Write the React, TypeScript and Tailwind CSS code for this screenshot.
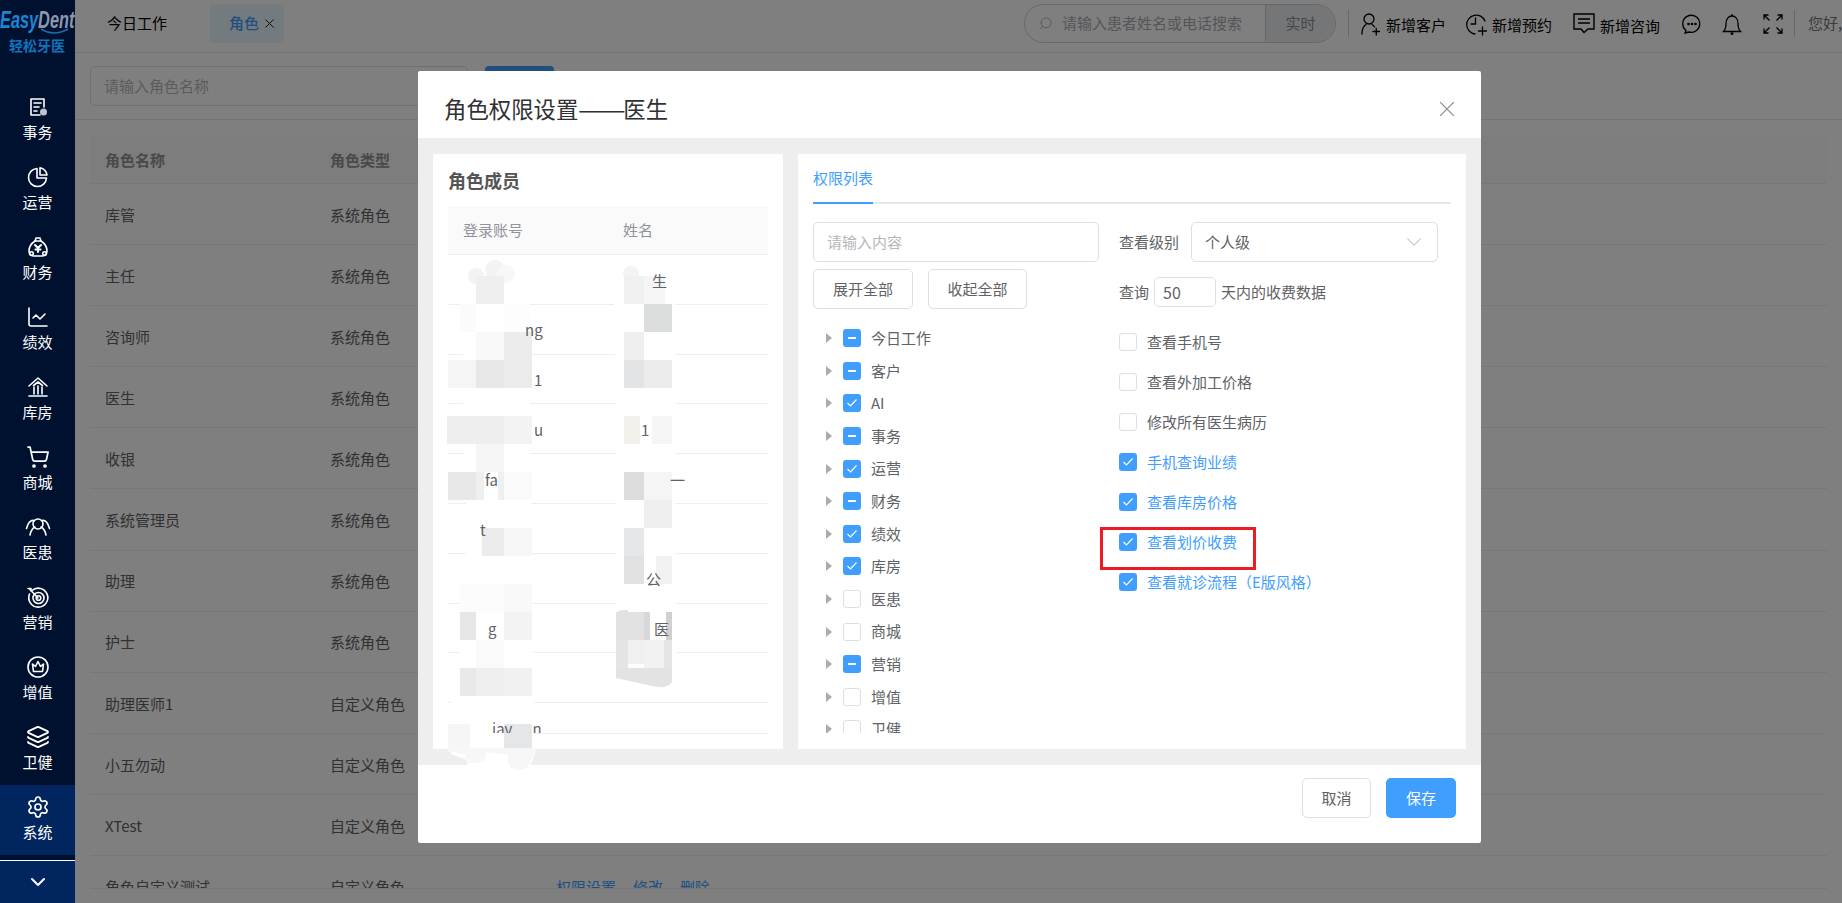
import React from "react";
import { ChevronDown, X, ChartLine, ShoppingCart, Layers, Settings, Search } from "lucide-react";

const s = { fill: "none", stroke: "currentColor", strokeWidth: 1.6, strokeLinecap: "round", strokeLinejoin: "round" } as const;

const IconAffair = () => (
  <svg width="24" height="24" viewBox="0 0 24 24" {...s}>
    <path d="M14 20H5V4h13v8" />
    <path d="M8 8h7M8 12h5M8 16h3" />
    <circle cx="17.5" cy="17" r="3.5" fill="currentColor" stroke="none" opacity="0.75" />
  </svg>
);
const IconPie = () => (
  <svg width="24" height="24" viewBox="0 0 24 24" {...s}>
    <path d="M11 3.5a9 9 0 1 0 9.5 9.5H11z" />
    <path d="M14 2.8A9 9 0 0 1 21 10h-7z" />
  </svg>
);
const IconFinance = () => (
  <svg width="24" height="24" viewBox="0 0 24 24" {...s}>
    <path d="M9 6c-3 2-6 6-6 10 0 3 2 5 5 5h8c3 0 5-2 5-5 0-4-3-8-6-10" />
    <path d="M9 6l1-3h4l1 3z" />
    <path d="M9 10l3 3 3-3M12 13v4M9.5 14.5h5" strokeWidth={2} />
    <circle cx="5.5" cy="18.5" r="1.8" />
    <circle cx="18.5" cy="18.5" r="1.8" />
  </svg>
);
const IconWarehouse = () => (
  <svg width="24" height="24" viewBox="0 0 24 24" {...s}>
    <path d="M3 11l9-8 9 8" />
    <path d="M7.5 10.5L12 7l4.5 3.5" />
    <path d="M8 12v7M12 11v8M16 12v7M3 21h18" />
  </svg>
);
const IconPatients = () => (
  <svg width="26" height="24" viewBox="0 0 26 24" {...s}>
    <circle cx="13" cy="9" r="5" />
    <path d="M5 20c1-5 3-7 5-8M21 20c-1-5-3-7-5-8" />
    <path d="M9 5.5C6 5 3 8 1.5 13.5M17 5.5c3-.5 6 2.500 7.500 8" />
  </svg>
);
const IconTarget = () => (
  <svg width="24" height="24" viewBox="0 0 24 24" {...s}>
    <path d="M6 5.500A9.500 9.500 0 1 1 3.500 9" />
    <circle cx="12.500" cy="13" r="5.500" />
    <circle cx="12.500" cy="13" r="2.300" />
    <path d="M12 13L3.500 4M2 3.500h3v2.500" />
  </svg>
);
const IconCrown = () => (
  <svg width="24" height="24" viewBox="0 0 24 24" {...s}>
    <circle cx="12" cy="12" r="10" />
    <path d="M6.500 9l3 2.500L12 6.500l2.500 5 3-2.500-1 7.500h-9z" />
  </svg>
);
const IconUserPlus = () => (
  <svg width="22" height="26" viewBox="0 0 22 26" fill="none" stroke="currentColor" strokeWidth="1.3" strokeLinecap="round">
    <circle cx="10" cy="8" r="5" />
    <path d="M3 23c0-5 1.500-8 4-9.500M13 13.500c1 .5 2 1.500 2.500 2.500" />
    <path d="M14 20.500h6.500M17.250 17.500v6.500" />
  </svg>
);
const IconClockPlus = () => (
  <svg width="24" height="26" viewBox="0 0 24 26" fill="none" stroke="currentColor" strokeWidth="1.3" strokeLinecap="round">
    <path d="M20 10A9.500 9.500 0 1 0 10 23" />
    <path d="M10.500 7v6H6" />
    <path d="M13.500 20h8M17.500 16v8" />
  </svg>
);
const IconMessage = () => (
  <svg width="22" height="26" viewBox="0 0 22 26" fill="none" stroke="currentColor" strokeWidth="1.4">
    <path d="M1 3h20v15h-6l-4 3.500L8 18H1z" />
    <path d="M5 8h12M5 12h12" />
  </svg>
);
const IconChat = () => (
  <svg width="20" height="20" viewBox="0 0 20 20" fill="none" stroke="currentColor" strokeWidth="1.3">
    <path d="M4 16.500A8.500 8.500 0 1 1 7 18l-4 1z" />
    <circle cx="6.500" cy="10" r=".7" fill="currentColor" />
    <circle cx="10" cy="10" r=".7" fill="currentColor" />
    <circle cx="13.500" cy="10" r=".7" fill="currentColor" />
  </svg>
);
const IconBell = () => (
  <svg width="20" height="24" viewBox="0 0 20 24" fill="none" stroke="currentColor" strokeWidth="1.3">
    <path d="M1.500 19.500c2-2 2.500-4 2.500-8 0-4.500 2.500-7.500 6-7.500s6 3 6 7.500c0 4 .5 6 2.500 8z" />
    <path d="M10 4V2" />
    <circle cx="10" cy="21.500" r="1.500" fill="currentColor" stroke="none" />
  </svg>
);
const IconExpand = () => (
  <svg width="20" height="20" viewBox="0 0 20 20" fill="none" stroke="currentColor" strokeWidth="1.3">
    <path d="M1 5.500V1h4.500M1 1l5.500 5.500M19 5.500V1h-4.500M19 1l-5.500 5.500M1 14.500V19h4.500M1 19l5.500-5.500M19 14.500V19h-4.500M19 19l-5.500-5.500" />
  </svg>
);

const nav: [string, React.ReactNode][] = [
  ["事务", <IconAffair />],
  ["运营", <IconPie />],
  ["财务", <IconFinance />],
  ["绩效", <ChartLine size={24} strokeWidth={1.6} />],
  ["库房", <IconWarehouse />],
  ["商城", <ShoppingCart size={24} strokeWidth={1.7} />],
  ["医患", <IconPatients />],
  ["营销", <IconTarget />],
  ["增值", <IconCrown />],
  ["卫健", <Layers size={24} strokeWidth={1.8} />],
  ["系统", <Settings size={24} strokeWidth={1.7} />],
];

const roles: [string, string][] = [
  ["库管", "系统角色"],
  ["主任", "系统角色"],
  ["咨询师", "系统角色"],
  ["医生", "系统角色"],
  ["收银", "系统角色"],
  ["系统管理员", "系统角色"],
  ["助理", "系统角色"],
  ["护士", "系统角色"],
  ["助理医师1", "自定义角色"],
  ["小五勿动", "自定义角色"],
  ["XTest", "自定义角色"],
  ["角色自定义测试", "自定义角色"],
];

type CheckState = "on" | "off" | "half";
const tree: [string, CheckState][] = [
  ["今日工作", "half"],
  ["客户", "half"],
  ["AI", "on"],
  ["事务", "half"],
  ["运营", "on"],
  ["财务", "half"],
  ["绩效", "on"],
  ["库房", "on"],
  ["医患", "off"],
  ["商城", "off"],
  ["营销", "half"],
  ["增值", "off"],
  ["卫健", "off"],
];

const perms: [string, boolean][] = [
  ["查看手机号", false],
  ["查看外加工价格", false],
  ["修改所有医生病历", false],
  ["手机查询业绩", true],
  ["查看库房价格", true],
  ["查看划价收费", true],
  ["查看就诊流程（E版风格）", true],
];

// Fragments of the account / name cells left readable by the mosaic in the reference.
const members: { a: string; ax: number; n: string; nx: number }[] = [
  { a: "", ax: 0, n: "生", nx: 29 },
  { a: "ng", ax: 62, n: "", nx: 0 },
  { a: "1", ax: 71, n: "", nx: 0 },
  { a: "u", ax: 71, n: "1", nx: 18 },
  { a: "fa", ax: 22, n: "一", nx: 47 },
  { a: "t", ax: 17, n: "", nx: 0 },
  { a: "", ax: 0, n: "公", nx: 23 },
  { a: "g", ax: 25, n: "医", nx: 31 },
  { a: "", ax: 0, n: "", nx: 0 },
  { a: "iav\u00a0\u00a0\u00a0\u00a0\u00a0\u00a0n", ax: 29, n: "", nx: 0 },
];

const tiles: [number, number, number, number, string][] = [
  [476, 276, 28, 28, "#efefef"], [460, 304, 16, 28, "#fbfbfb"], [504, 304, 26, 28, "#fdfdfd"],
  [476, 332, 28, 28, "#f9f9f9"], [504, 332, 28, 28, "#ececec"],
  [448, 360, 28, 28, "#f5f5f5"], [476, 360, 28, 28, "#e8e8e8"], [504, 360, 28, 28, "#ebebeb"],
  [447, 416, 57, 28, "#eeeeee"], [504, 416, 28, 28, "#f3f3f3"], [476, 444, 28, 28, "#f6f6f6"],
  [448, 472, 28, 28, "#e8e8e8"], [476, 472, 8, 28, "#efefef"], [498, 472, 6, 28, "#efefef"], [504, 472, 28, 28, "#fafafa"],
  [482, 528, 22, 28, "#ebebeb"], [504, 528, 28, 28, "#f7f7f7"],
  [460, 584, 44, 28, "#fcfcfc"], [504, 584, 28, 28, "#f9f9f9"],
  [460, 612, 16, 28, "#e6e6e6"], [504, 612, 28, 28, "#f3f3f3"], [476, 640, 28, 28, "#fafafa"],
  [460, 668, 16, 28, "#e9e9e9"], [476, 668, 28, 28, "#efefef"], [504, 668, 28, 28, "#f1f1f1"],
  [448, 724, 22, 28, "#f6f6f6"], [504, 724, 28, 28, "#e5e6e8"],
  [624, 276, 20, 28, "#f0f0f0"], [644, 276, 21, 28, "#f5f5f5"],
  [644, 304, 28, 28, "#dcdddd"], [624, 332, 20, 28, "#efefef"],
  [624, 360, 20, 28, "#e2e4e6"], [644, 360, 28, 28, "#ebebeb"],
  [624, 416, 16, 28, "#f3f0ec"], [652, 416, 20, 28, "#f5f5f5"],
  [624, 472, 20, 28, "#dcdcdc"], [644, 472, 28, 28, "#f5f5f5"],
  [644, 500, 28, 28, "#efefef"], [624, 528, 20, 28, "#e6e7e8"],
  [624, 556, 20, 28, "#e2e2e2"], [656, 556, 16, 28, "#f2f2f2"],
  [616, 612, 28, 28, "#e2e2e2"], [644, 612, 6, 28, "#d8d8d8"], [666, 612, 6, 28, "#d0d0d0"],
  [616, 640, 12, 28, "#e4e4e4"], [628, 640, 16, 24, "#f0f0f0"], [644, 640, 20, 28, "#f2f2f2"], [664, 640, 8, 28, "#e5e5e5"],
];

const Mosaic = () => (
  <svg className="absolute left-0 top-0 pointer-events-none" width="1063" height="772" viewBox="418 71 1063 772">
    <path d="M465 276c0-6 4-9 9-9 1-5 4-7 9-7s8 3 9 6c3-2 10-2 13 1 3 2 5 5 5 9l20 28v130l5 320-8 20-8 6c-2 6-10 6-12 0v-10l-20-4-3 14c-4 5-12 4-15-2l-2-18-16-6v-55l12-60 4-100-4-150 0-60 12-5z" fill="#ffffff" />
    <path d="M624 276c0-6 4-12 10-12 6 0 9 4 10 8 8 0 16 4 19 10l12 22v330l3 30-8 30h-20l-20-10-14-20V400l-2-100z" fill="#ffffff" />
    <circle cx="495" cy="270" r="10" fill="#f3f3f3" />
    <circle cx="506" cy="274" r="9" fill="#f7f7f7" />
    <circle cx="476" cy="276" r="8" fill="#f3f3f3" />
    <circle cx="631" cy="274" r="8" fill="#f3f3f3" />
    {tiles.map(([x, y, w, h, c], i) => (
      <rect key={i} x={x} y={y} width={w} height={h} fill={c} />
    ))}
    <path d="M448 750l17 5v4c2 6 18 6 21-2v-5l22 3v8c2 9 20 9 22 0l4-8v-7h-86z" fill="#f7f7f7" />
    <path d="M616 616c0-5 4-6 8-6h4v6h-12z" fill="#e2e2e2" />
    <path d="M616 668h56v14c-4 6-12 6-20 4l-36-8z" fill="#e3e3e3" />
  </svg>
);

const Check = ({ state }: { state: CheckState }) => (
  <span
    className={
      state === "off"
        ? "flex h-[18px] w-[18px] shrink-0 items-center justify-center rounded-[3px] border border-[#dcdfe6] bg-white"
        : "flex h-[18px] w-[18px] shrink-0 items-center justify-center rounded-[3px] bg-[#409eff]"
    }
  >
    {state === "on" && (
      <svg width="12" height="10" viewBox="0 0 12 10" fill="none" stroke="#fff" strokeWidth="1.2">
        <path d="M1.500 5l3 3 6-6.500" />
      </svg>
    )}
    {state === "half" && <span className="h-[2px] w-[8px] bg-white" />}
  </span>
);

export default function App() {
  return (
    <div className="relative flex h-[903px] w-[1842px] overflow-hidden bg-white text-[15px] text-[#606266] [font-family:'Noto_Sans_CJK_SC','Noto_Sans',sans-serif]">
      <aside className="relative z-20 flex h-full w-[75px] shrink-0 flex-col bg-[#001130] text-white">
        <div className="relative h-[85px] shrink-0 overflow-hidden">
          <div className="absolute left-0 top-[6px] origin-left scale-x-[0.68] whitespace-nowrap text-[24px] font-bold italic leading-[28px] [font-family:'Liberation_Sans',sans-serif]">
            <span className="text-[#1a86d8]">Easy</span>
            <span className="text-[#8b98ad]">Dent</span>
          </div>
          <svg className="absolute left-[40px] top-[28px]" width="30" height="7" viewBox="0 0 30 7" fill="none" stroke="#1a6fb8" strokeWidth="1.500">
            <path d="M1 1c8 5 18 5 27 0" />
          </svg>
          <div className="absolute left-[9px] top-[36px] whitespace-nowrap text-[14px] font-bold leading-[18px] text-[#0f73bd]">
            轻松牙医
          </div>
        </div>
        {nav.map(([label, icon]) => (
          <div
            key={label}
            className={
              label === "系统"
                ? "flex h-[70px] shrink-0 flex-col items-center bg-[#00255f] pt-[10px]"
                : "flex h-[70px] shrink-0 flex-col items-center pt-[10px]"
            }
          >
            <span className="flex h-[24px] items-center justify-center">{icon}</span>
            <span className="mt-[2px] text-[15px] leading-[22px]">{label}</span>
          </div>
        ))}
        <div className="mt-[5px] flex flex-1 items-center justify-center border-t border-white bg-[#00255f]">
          <ChevronDown size={24} strokeWidth={2} />
        </div>
      </aside>

      <main className="flex min-w-0 flex-1 flex-col">
        <header className="flex h-[53px] shrink-0 items-center overflow-hidden border-b border-[#e6e6e6] pb-[6px] pt-[1px] text-black">
          <span className="ml-[32px] shrink-0">今日工作</span>
          <div className="ml-[43px] flex h-[39px] w-[74px] shrink-0 items-center rounded-[4px] bg-[#e8f6ff] pl-[19px] text-[#409eff]">
            <span className="font-medium">角色</span>
            <X size={15} strokeWidth={1.6} className="ml-[3px] text-[#222]" />
          </div>
          <div className="ml-[740px] flex h-[39px] w-[312px] shrink-0 items-center overflow-hidden rounded-[20px] border border-[#cfcfcf] text-[#a8abb2]">
            <Search size={15} strokeWidth={1.4} className="ml-[13px] -scale-x-100" />
            <span className="ml-[9px] w-[203px] shrink-0">请输入患者姓名或电话搜索</span>
            <span className="flex h-full flex-1 items-center justify-center border-l border-[#d0d0d0] bg-[#e9ecf0] text-[#8a8d94]">实时</span>
          </div>
          <span className="ml-[12px] h-[27px] w-px shrink-0 bg-[#d0d0d0]" />
          <span className="ml-[10px] shrink-0"><IconUserPlus /></span>
          <span className="ml-[5px] mt-[4px] shrink-0">新增客户</span>
          <span className="ml-[19px] shrink-0"><IconClockPlus /></span>
          <span className="ml-[3px] mt-[4px] shrink-0">新增预约</span>
          <span className="ml-[21px] shrink-0"><IconMessage /></span>
          <span className="ml-[5px] mt-[6px] shrink-0">新增咨询</span>
          <span className="ml-[22px] shrink-0"><IconChat /></span>
          <span className="ml-[20px] shrink-0"><IconBell /></span>
          <span className="ml-[21px] shrink-0"><IconExpand /></span>
          <span className="ml-[11px] h-[27px] w-px shrink-0 bg-[#d0d0d0]" />
          <span className="ml-[13px] shrink-0 whitespace-nowrap text-[#777]">您好,医生</span>
        </header>

        <div className="flex h-[67px] shrink-0 items-start gap-[17px] border-b border-[#e6e6e6] pl-[15px] pt-[13px]">
          <div className="flex h-[40px] w-[378px] items-center rounded-[5px] border border-[#dcdfe6] pl-[13px] text-[#b4b7bd]">
            请输入角色名称
          </div>
          <div className="flex h-[40px] w-[69px] items-center justify-center rounded-[4px] bg-[#409eff] text-white">查询</div>
        </div>

        <div className="mx-[15px] mt-[15px] h-[754px] overflow-hidden border-b border-[#ebeef5]">
          <div className="flex h-[49px] items-center border-b border-[#ebeef5] bg-[#fafafa] pt-[2px] font-bold text-[#909399]">
            <span className="w-[240px] pl-[15px]">角色名称</span>
            <span>角色类型</span>
          </div>
          {roles.map(([name, type]) => (
            <div key={name} className="flex h-[61.1px] items-center border-b border-[#ebeef5] pt-[2px]">
              <span className="w-[240px] pl-[15px]">{name}</span>
              <span className="w-[226px]">{type}</span>
              <span className="flex gap-[17px] text-[#409eff]">
                <span>权限设置</span>
                <span>修改</span>
                <span>删除</span>
              </span>
            </div>
          ))}
        </div>
      </main>

      <div className="absolute bottom-0 left-[75px] right-0 top-0 z-10 bg-black/50">
        <div className="absolute left-[343px] top-[71px] flex h-[772px] w-[1063px] flex-col rounded-[2px] bg-white">
          <div className="flex h-[67px] shrink-0 items-center justify-between pl-[26px] pr-[21px] pt-[9px]">
            <span className="flex text-[22.4px] text-[#303133]">
              <span>角色权限设置</span>
              <span className="inline-block w-[45px] origin-left scale-x-[1.27] whitespace-nowrap">——</span>
              <span>医生</span>
            </span>
            <X size={26} strokeWidth={1} className="text-[#909399]" />
          </div>

          <div className="flex h-[627px] shrink-0 gap-[15px] bg-[#eeeeee] pl-[15px] pt-[16px]">
            <section className="h-[595px] w-[350px] shrink-0 bg-white px-[15px]">
              <h2 className="flex h-[52px] items-center text-[18px] font-bold text-[#555]">角色成员</h2>
              <div className="h-[528px] w-[320px] overflow-hidden border-b border-[#ebeef5]">
                <div className="flex h-[49px] items-center border-b border-[#ebeef5] bg-[#fafafa] text-[#909399]">
                  <span className="w-[175px] pl-[15px]">登录账号</span>
                  <span>姓名</span>
                </div>
                {members.map((m, i) => (
                  <div key={i} className="flex h-[49.8px] items-center border-b border-[#ebeef5] pt-[3px]">
                    <span className="w-[175px] pl-[15px]"><span className="relative z-10" style={{ marginLeft: m.ax }}>{m.a}</span></span>
                    <span><span className="relative z-10" style={{ marginLeft: m.nx }}>{m.n}</span></span>
                  </div>
                ))}
              </div>
            </section>

            <section className="h-[595px] w-[668px] shrink-0 bg-white px-[15px]">
              <div className="flex h-[50px] border-b-2 border-[#e4e7ed]">
                <span className="-mb-[2px] flex w-[60px] items-center border-b-2 border-[#409eff] pt-[1px] text-[#409eff]">权限列表</span>
              </div>
              <div className="flex pt-[18px]">
                <div className="w-[286px] shrink-0">
                  <div className="flex h-[40px] items-center rounded-[5px] border border-[#dcdfe6] pl-[13px] text-[#b4b7bd]">请输入内容</div>
                  <div className="mt-[7px] flex gap-[15px]">
                    <span className="flex h-[40px] w-[100px] items-center justify-center rounded-[5px] border border-[#dcdfe6]">展开全部</span>
                    <span className="flex h-[40px] w-[99px] items-center justify-center rounded-[5px] border border-[#dcdfe6]">收起全部</span>
                  </div>
                  <div className="mt-[13px] h-[411px] overflow-hidden">
                    {tree.map(([label, st]) => (
                      <div key={label} className="flex h-[32.6px] items-center pl-[13px]">
                        <span className="h-0 w-0 border-y-[5px] border-l-[6px] border-y-transparent border-l-[#a8abb2]" />
                        <span className="ml-[11px]"><Check state={st} /></span>
                        <span className="ml-[10px]">{label}</span>
                      </div>
                    ))}
                  </div>
                </div>

                <div className="ml-[20px] flex-1">
                  <div className="flex h-[40px] items-center">
                    <span className="w-[72px] shrink-0">查看级别</span>
                    <div className="flex h-[40px] w-[247px] items-center justify-between rounded-[5px] border border-[#dcdfe6] pl-[13px] pr-[10px]">
                      <span>个人级</span>
                      <ChevronDown size={26} strokeWidth={0.9} className="text-[#a8abb2]" />
                    </div>
                  </div>
                  <div className="mt-[15px] flex h-[30px] items-center">
                    <span className="w-[35px] shrink-0">查询</span>
                    <span className="flex h-[30px] w-[62px] items-center rounded-[5px] border border-[#dcdfe6] pl-[8px] text-[16px]">50</span>
                    <span className="ml-[5px]">天内的收费数据</span>
                  </div>
                  <div className="mt-[15px]">
                    {perms.map(([label, on]) => (
                      <div key={label} className={on ? "flex h-[40px] items-center text-[#409eff]" : "flex h-[40px] items-center"}>
                        <Check state={on ? "on" : "off"} />
                        <span className="ml-[10px]">{label}</span>
                      </div>
                    ))}
                  </div>
                </div>
              </div>
            </section>
          </div>

          <div className="flex flex-1 items-start justify-end gap-[15px] pr-[25px] pt-[13px]">
            <span className="flex h-[40px] w-[69px] items-center justify-center rounded-[5px] border border-[#dcdfe6]">取消</span>
            <span className="flex h-[40px] w-[70px] items-center justify-center rounded-[5px] bg-[#409eff] text-white">保存</span>
          </div>

          <Mosaic />
          <div className="absolute left-[682px] top-[456px] h-[43px] w-[156px] border-[3px] border-[#ed1c24]" />
        </div>
      </div>
    </div>
  );
}
